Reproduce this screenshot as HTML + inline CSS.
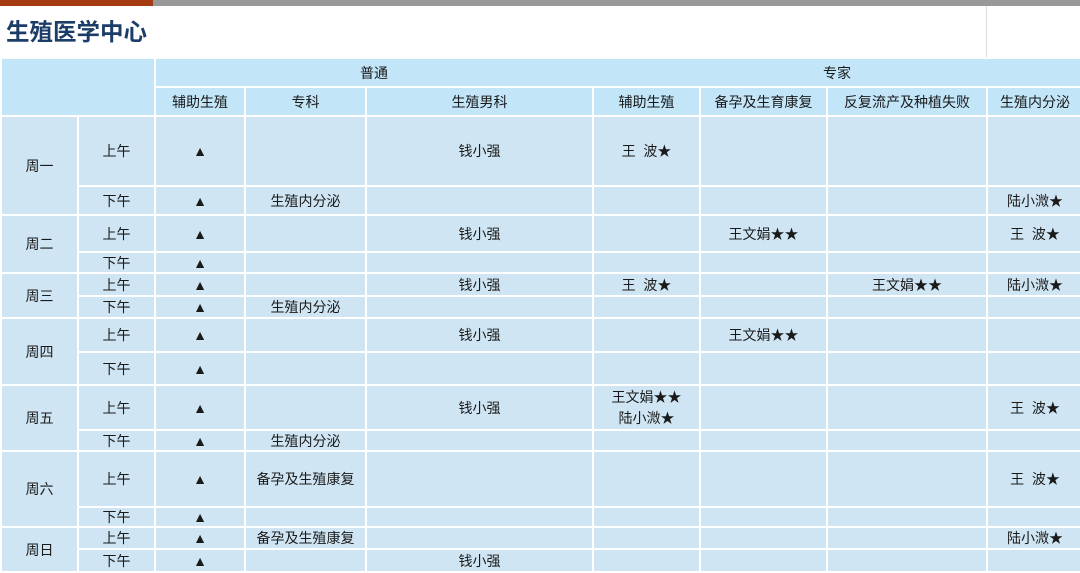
<!DOCTYPE html>
<html><head><meta charset="utf-8"><style>
html,body{margin:0;padding:0;width:1080px;height:572px;overflow:hidden;background:#fff;font-family:"Liberation Sans","Noto Sans CJK SC",sans-serif;}
.bar1{position:absolute;left:0;top:0;width:153px;height:6px;background:#a53a12;}
.bar2{position:absolute;left:153px;top:0;width:927px;height:6px;background:#999;}
.title{position:absolute;left:6px;top:18px;font-size:23.5px;font-weight:bold;color:#1d3d69;line-height:28px;}
.vl{position:absolute;left:986px;top:6px;width:1px;height:52px;background:#ddd;}
table{position:absolute;left:0;top:57px;border-collapse:collapse;table-layout:fixed;width:1082px;}
td{border:2px solid #fff;background:#cfe5f3;text-align:center;font-size:14px;color:#1a1a1a;padding:0;line-height:16px;overflow:hidden;}
tr.h td{background:#c2e5f8;}
.hs{position:absolute;top:6px;}
</style></head><body>
<div class="bar1"></div><div class="bar2"></div>
<div class="title">生殖医学中心</div><div class="vl"></div>
<table>
<colgroup><col style="width:77px"><col style="width:77px"><col style="width:90px"><col style="width:121px"><col style="width:227px"><col style="width:107px"><col style="width:127px"><col style="width:160px"><col style="width:96px"></colgroup>
<tr class="h" style="height:29px"><td colspan="2" rowspan="2"></td><td colspan="7" style="position:relative"><span class="hs" style="left:204px">普通</span><span class="hs" style="left:667px">专家</span></td></tr>
<tr class="h" style="height:29px"><td>辅助生殖</td><td>专科</td><td>生殖男科</td><td>辅助生殖</td><td>备孕及生育康复</td><td>反复流产及种植失败</td><td>生殖内分泌</td></tr>
<tr style="height:70px"><td rowspan="2">周一</td><td>上午</td><td>▲</td><td></td><td>钱小强</td><td>王&nbsp; 波★</td><td></td><td></td><td></td></tr>
<tr style="height:29px"><td>下午</td><td>▲</td><td>生殖内分泌</td><td></td><td></td><td></td><td></td><td>陆小溦★</td></tr>
<tr style="height:37px"><td rowspan="2">周二</td><td>上午</td><td>▲</td><td></td><td>钱小强</td><td></td><td>王文娟★★</td><td></td><td>王&nbsp; 波★</td></tr>
<tr style="height:21px"><td>下午</td><td>▲</td><td></td><td></td><td></td><td></td><td></td><td></td></tr>
<tr style="height:23px"><td rowspan="2">周三</td><td>上午</td><td>▲</td><td></td><td>钱小强</td><td>王&nbsp; 波★</td><td></td><td>王文娟★★</td><td>陆小溦★</td></tr>
<tr style="height:22px"><td>下午</td><td>▲</td><td>生殖内分泌</td><td></td><td></td><td></td><td></td><td></td></tr>
<tr style="height:34px"><td rowspan="2">周四</td><td>上午</td><td>▲</td><td></td><td>钱小强</td><td></td><td>王文娟★★</td><td></td><td></td></tr>
<tr style="height:33px"><td>下午</td><td>▲</td><td></td><td></td><td></td><td></td><td></td><td></td></tr>
<tr style="height:45px"><td rowspan="2">周五</td><td>上午</td><td>▲</td><td></td><td>钱小强</td><td style="line-height:21px">王文娟★★<br>陆小溦★</td><td></td><td></td><td>王&nbsp; 波★</td></tr>
<tr style="height:21px"><td>下午</td><td>▲</td><td>生殖内分泌</td><td></td><td></td><td></td><td></td><td></td></tr>
<tr style="height:56px"><td rowspan="2">周六</td><td>上午</td><td>▲</td><td>备孕及生殖康复</td><td></td><td></td><td></td><td></td><td>王&nbsp; 波★</td></tr>
<tr style="height:20px"><td>下午</td><td>▲</td><td></td><td></td><td></td><td></td><td></td><td></td></tr>
<tr style="height:22px"><td rowspan="2">周日</td><td>上午</td><td>▲</td><td>备孕及生殖康复</td><td></td><td></td><td></td><td></td><td>陆小溦★</td></tr>
<tr style="height:23px"><td>下午</td><td>▲</td><td></td><td>钱小强</td><td></td><td></td><td></td><td></td></tr>
</table>
</body></html>
